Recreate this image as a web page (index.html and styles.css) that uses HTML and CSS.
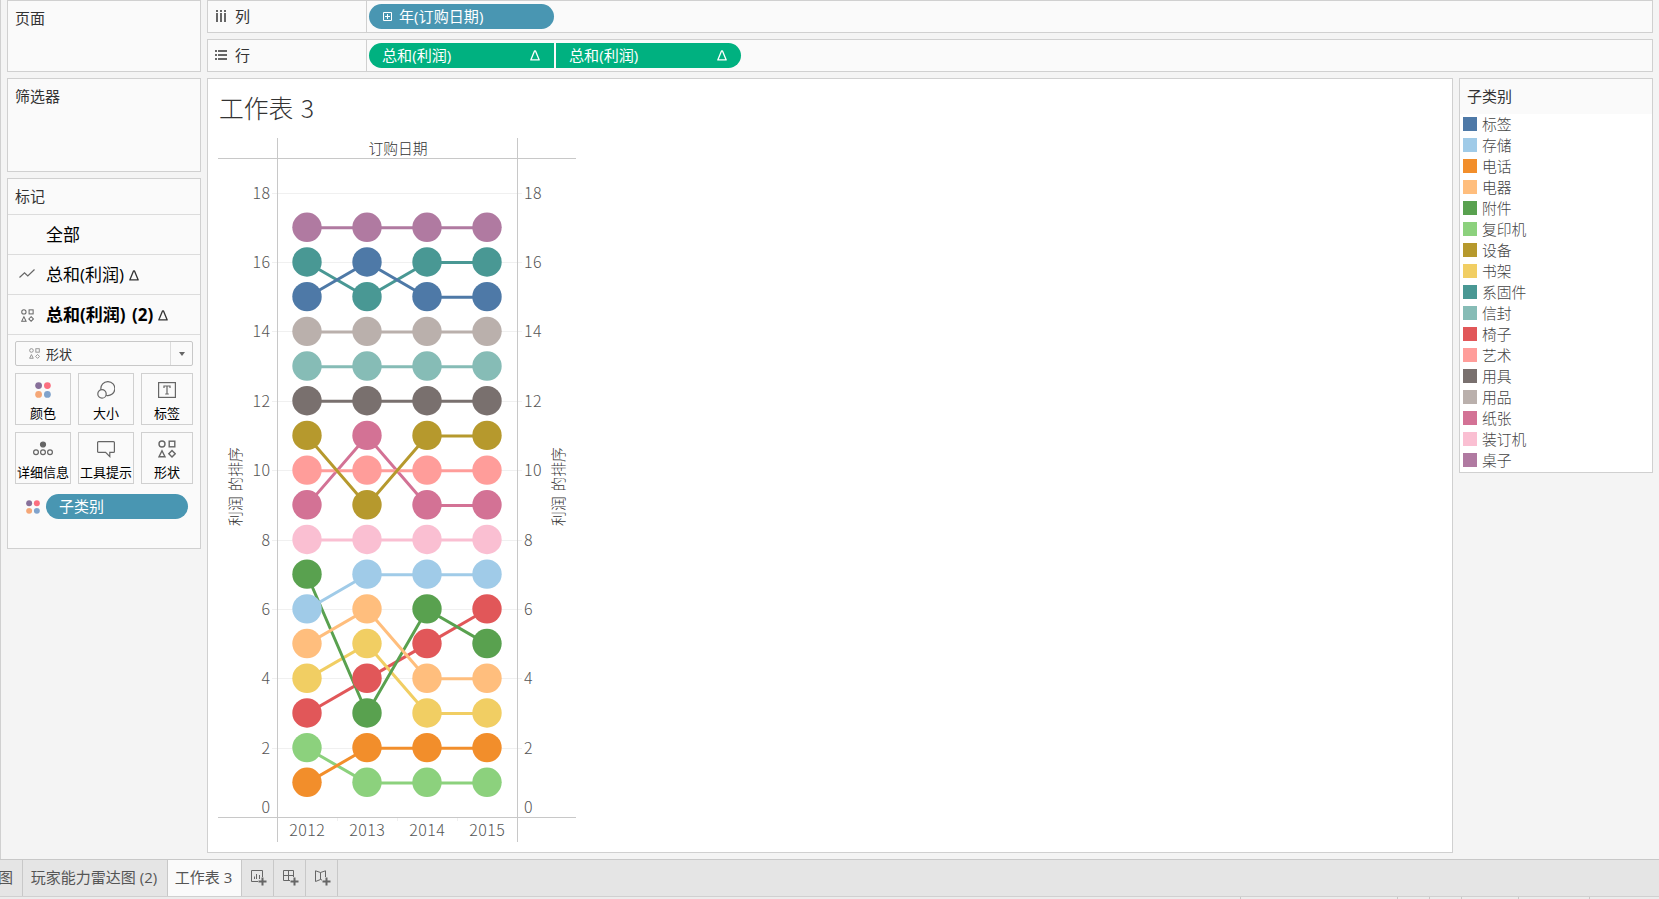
FILE: index.html
```
<!DOCTYPE html>
<html lang="zh-CN">
<head>
  <meta charset="UTF-8" />
  <title>工作表 3</title>
  <link rel="stylesheet" href="styles.css">
</head>
<body>

<!-- shared icons -->
<svg class="defs" width="0" height="0">
  <symbol id="shapes" viewBox="0 0 18 18">
    <g fill="none" stroke="currentColor" stroke-width="1.4">
      <circle cx="4" cy="4" r="3"/>
      <rect x="11.2" y="1.2" width="5.6" height="5.6"/>
      <path d="M4 10.8L7 16.8H1Z"/>
      <path d="M14 10.6L17.2 13.8L14 17L10.8 13.8Z"/>
    </g>
  </symbol>
  <symbol id="dots" viewBox="0 0 16 16">
    <circle cx="3.6" cy="3.6" r="3.4" fill="#87709a"/>
    <circle cx="12.4" cy="3.6" r="3.4" fill="#fb6f80"/>
    <circle cx="3.6" cy="12.4" r="3.4" fill="#f5a777"/>
    <circle cx="12.4" cy="12.4" r="3.4" fill="#80a3cc"/>
  </symbol>
  <symbol id="delta" viewBox="0 0 10 11">
    <path d="M4.5 .9H5.5L9.2 9.9H.8Z" fill="none" stroke="currentColor" stroke-width="1.3" stroke-linejoin="round"/>
  </symbol>
</svg>

<div class="workspace">
  <aside class="side">
    <section class="card pages">页面</section>
    <section class="card filters">筛选器</section>
    <section class="card marks">
      <div class="marks-title">标记</div>
      <div class="layer">全部</div>
      <div class="layer">
        <svg class="layer-icon" width="17" height="18" viewBox="0 0 17 18"><path d="M.5 11.5L5.5 6.8L8.8 10L15.5 3.5" fill="none" stroke="#666" stroke-width="1.2"/></svg>
        <span>总和(利润)</span><svg class="delta" width="10" height="11"><use href="#delta"/></svg>
      </div>
      <div class="layer active">
        <svg class="layer-icon" width="13" height="13"><use href="#shapes"/></svg>
        <span>总和(利润) (2)</span><svg class="delta" width="10" height="11"><use href="#delta"/></svg>
      </div>
      <div class="mark-type">
        <svg width="11" height="11"><use href="#shapes"/></svg>
        <span>形状</span>
        <i class="arrow"></i>
      </div>
      <div class="buttons">
        <div class="btn"><svg width="18" height="18" viewBox="0 0 18 18"><use href="#dots" x="1" y="1" width="16" height="16"/></svg>颜色</div>
        <div class="btn">
          <svg width="18" height="18" viewBox="0 0 18 18" fill="none" stroke="#666" stroke-width="1.2"><path d="M3.9 8.4A7 7 0 1 1 9.2 14.4"/><circle cx="5" cy="12.9" r="4.2"/></svg>大小
        </div>
        <div class="btn">
          <svg width="18" height="18" viewBox="0 0 18 18" fill="none" stroke="#666" stroke-width="1.2"><rect x=".6" y="1.6" width="16.8" height="14.8"/><path d="M6 7V5H12V7M9 5V13M7.2 13H10.8"/></svg>标签
        </div>
        <div class="btn">
          <svg width="20" height="18" viewBox="0 0 20 18" fill="none" stroke="#666" stroke-width="1.2"><circle cx="10" cy="4.5" r="2.5" fill="#666"/><circle cx="3" cy="12.3" r="2.4"/><circle cx="10" cy="12.3" r="2.4"/><circle cx="17" cy="12.3" r="2.4"/></svg>详细信息
        </div>
        <div class="btn">
          <svg width="18" height="18" viewBox="0 0 18 18" fill="none" stroke="#666" stroke-width="1.2"><path d="M1.6 1.6H16.4Q17.4 1.6 17.4 2.6V11.4Q17.4 12.4 16.4 12.4H12.8V16.6L8.6 12.4H1.6Q.6 12.4 .6 11.4V2.6Q.6 1.6 1.6 1.6Z"/></svg>工具提示
        </div>
        <div class="btn"><svg class="gray" width="18" height="18"><use href="#shapes"/></svg>形状</div>
      </div>
      <div class="encoding">
        <svg width="14" height="14"><use href="#dots"/></svg>
        <div class="pill blue">子类别</div>
      </div>
    </section>
  </aside>

  <main class="main">
    <div class="shelf">
      <div class="shelf-label">
        <svg width="12" height="13" viewBox="0 0 12 13" fill="#666"><path d="M1 0h2v2H1zM5 0h2v2H5zM9 0h2v2H9zM1 3h2v9H1zM5 3h2v9H5zM9 3h2v9H9z"/></svg>
        列
      </div>
      <div class="pill blue year">
        <svg width="9" height="9" viewBox="0 0 9 9" fill="none" stroke="#fff"><path d="M.5 .5H8.5V8.5H.5ZM2 4.5H7M4.5 2V7"/></svg>
        年(订购日期)
      </div>
    </div>
    <div class="shelf">
      <div class="shelf-label">
        <svg width="12" height="10" viewBox="0 0 12 10" fill="#666"><path d="M0 0h2v2H0zM3 0h9v2H3zM0 4h2v2H0zM3 4h9v2H3zM0 8h2v2H0zM3 8h9v2H3z"/></svg>
        行
      </div>
      <div class="pill green first">总和(利润)<svg width="10" height="11"><use href="#delta"/></svg></div>
      <div class="pill green last">总和(利润)<svg width="10" height="11"><use href="#delta"/></svg></div>
    </div>
    <div class="content">
      <section class="sheet">
        <h1>工作表 3</h1>
        <svg id="chart" width="358" height="704" viewBox="218 138 358 704"></svg>
      </section>
      <section class="legend">
        <h2>子类别</h2>
        <ul id="legend"></ul>
      </section>
    </div>
  </main>
</div>

<nav class="tabs">
  <div class="tab cut">图</div>
  <div class="tab radar">玩家能力雷达图 (2)</div>
  <div class="tab current">工作表 3</div>
  <div class="tab new"><svg width="16" height="16" viewBox="0 0 16 16" fill="none" stroke="#666"><path d="M7 11.5H.5V.5H11.5V7M3.5 9V6.5M5.5 9V4M8.5 9V5"/><path d="M11.5 7.5V15.5M7.5 11.5H15.5" stroke-width="2"/></svg></div>
  <div class="tab new"><svg width="16" height="16" viewBox="0 0 16 16" fill="none" stroke="#666"><path d="M7 10.5H.5V.5H10.5V7M5.5 .5V10.5M.5 5.5H10.5"/><path d="M11.5 7.5V15.5M7.5 11.5H15.5" stroke-width="2"/></svg></div>
  <div class="tab new"><svg width="16" height="16" viewBox="0 0 16 16" fill="none" stroke="#666"><path d="M7 10L5.5 9.5L.5 11.5V.8L5.5 2.5L10.5 .8V7M5.5 2.5V9.5"/><path d="M11.5 7.5V15.5M7.5 11.5H15.5" stroke-width="2"/></svg></div>
</nav>
<footer class="status"><i></i><i></i><i></i><i></i><i></i><i></i></footer>

<script>
  const years = [2012, 2013, 2014, 2015];

  // rank per year, in legend order
  const series = [
    { name: '标签', color: '#4e79a7', rank: [15, 16, 15, 15] },
    { name: '存储', color: '#a0cbe8', rank: [6, 7, 7, 7] },
    { name: '电话', color: '#f28e2b', rank: [1, 2, 2, 2] },
    { name: '电器', color: '#ffbe7d', rank: [5, 6, 4, 4] },
    { name: '附件', color: '#59a14f', rank: [7, 3, 6, 5] },
    { name: '复印机', color: '#8cd17d', rank: [2, 1, 1, 1] },
    { name: '设备', color: '#b6992d', rank: [11, 9, 11, 11] },
    { name: '书架', color: '#f1ce63', rank: [4, 5, 3, 3] },
    { name: '系固件', color: '#499894', rank: [16, 15, 16, 16] },
    { name: '信封', color: '#86bcb6', rank: [13, 13, 13, 13] },
    { name: '椅子', color: '#e15759', rank: [3, 4, 5, 6] },
    { name: '艺术', color: '#ff9d9a', rank: [10, 10, 10, 10] },
    { name: '用具', color: '#79706e', rank: [12, 12, 12, 12] },
    { name: '用品', color: '#bab0ac', rank: [14, 14, 14, 14] },
    { name: '纸张', color: '#d37295', rank: [9, 11, 9, 9] },
    { name: '装订机', color: '#fabfd2', rank: [8, 8, 8, 8] },
    { name: '桌子', color: '#b07aa1', rank: [17, 17, 17, 17] }
  ];

  const x = i => 307 + i * 60;
  const y = v => 817.6 - v * 34.69;
  let out = '';

  // grid and axis numbers
  for (let v = 0; v <= 18; v += 2) {
    const gy = Math.floor(y(v)) + 0.5;
    const ty = (v === 0 ? 807 : gy) + 5.5;
    if (v > 0) out += `<path class="grid" d="M272 ${gy}H522"/>`;
    out += `<text class="num" x="270.5" y="${ty}" text-anchor="end">${v}</text>`;
    out += `<text class="num" x="524" y="${ty}">${v}</text>`;
  }
  out += '<path class="grid" d="M337.5 818V821M397.5 818V821M457.5 818V821"/>';
  out += '<path class="rule" d="M218 158.5H576M218 817.5H576M277.5 138V842M517.5 138V842"/>';

  // first series is drawn last so it stays on top
  const stack = series.slice().reverse();
  for (const s of stack) {
    const pts = s.rank.map((r, i) => `${x(i)},${y(r)}`).join(' ');
    out += `<polyline points="${pts}" stroke="${s.color}"/>`;
  }
  for (const s of stack) {
    s.rank.forEach((r, i) => {
      out += `<circle cx="${x(i)}" cy="${y(r) - 0.6}" r="14.7" fill="${s.color}"/>`;
    });
  }

  years.forEach((t, i) => {
    out += `<text class="num" x="${x(i) + 0.2}" y="836" text-anchor="middle">${t}</text>`;
  });
  out += '<text class="title" x="398" y="153.5" text-anchor="middle">订购日期</text>';
  out += '<text class="title" transform="translate(241 486.5) rotate(-90)" text-anchor="middle">利润 的排序</text>';
  out += '<text class="title" transform="translate(564 486.5) rotate(-90)" text-anchor="middle">利润 的排序</text>';
  document.getElementById('chart').innerHTML = out;

  document.getElementById('legend').innerHTML = series
    .map(s => `<li><i style="background:${s.color}"></i>${s.name}</li>`)
    .join('');
</script>

</body>
</html>
```

FILE: styles.css
```
* {
  box-sizing: border-box;
}

body {
  margin: 0;
  height: 899px;
  overflow: hidden;
  display: flex;
  flex-direction: column;
  background: #f4f4f4;
  color: #333;
  font-family: "Open Sans", "Noto Sans CJK SC", sans-serif;
  font-size: 15px;
  line-height: 20px;
}

svg {
  display: block;
  flex: none;
}

.defs {
  position: absolute;
}

.workspace {
  display: flex;
  gap: 6px;
  height: 859px;
  padding-left: 6px;
  border-left: 1px solid #d0d0d0;
}

.side {
  display: flex;
  flex-direction: column;
  gap: 6px;
  width: 194px;
}

.card {
  background: #fafafa;
  border: 1px solid #d0d0d0;
  padding: 7px;
}

.pages {
  height: 72px;
}

.filters {
  height: 94px;
}

.marks {
  height: 371px;
  padding: 0;
}

.marks-title {
  height: 35px;
  padding: 7px;
}

.layer {
  display: flex;
  align-items: center;
  height: 40px;
  padding: 1px 0 0 38px;
  border-top: 1px solid #dcdcdc;
  color: #000;
  font-size: 17px;
  word-spacing: 2px;
}

.layer.active {
  height: 41px;
  border-bottom: 1px solid #dcdcdc;
  font-weight: bold;
}

.layer-icon {
  width: 17px;
  margin-left: -27px;
  margin-right: 10px;
  color: #666;
}

.delta {
  margin-left: 5px;
  color: #333;
}

.mark-type {
  display: flex;
  align-items: center;
  height: 25px;
  margin: 6px 7px 7px;
  padding-left: 13px;
  border: 1px solid #c8c8c8;
  border-radius: 2px;
  color: #888;
  font-size: 13px;
}

.mark-type span {
  flex: 1;
  margin-left: 6px;
  color: #333;
}

.arrow {
  display: flex;
  align-items: center;
  justify-content: center;
  width: 22px;
  height: 23px;
  border-left: 1px solid #dcdcdc;
}

.arrow::before {
  content: "";
  border: 3.5px solid transparent;
  border-top: 4px solid #666;
  border-bottom: 0;
}

.buttons {
  display: grid;
  grid-template-columns: 56px 56px 52px;
  gap: 7px;
  padding: 0 7px;
}

.btn {
  display: flex;
  flex-direction: column;
  align-items: center;
  gap: 5px;
  height: 52px;
  padding-top: 7px;
  border: 1px solid #d0d0d0;
  color: #000;
  font-size: 13px;
  line-height: 18px;
  white-space: nowrap;
}

.gray {
  color: #666;
}

.encoding {
  display: flex;
  align-items: center;
  gap: 6px;
  padding: 10px 0 0 18px;
}

.pill {
  display: flex;
  align-items: center;
  height: 25px;
  padding: 0 0 1px 13px;
  border-radius: 13px;
  color: #fff;
}

.blue {
  background: #4996b2;
}

.green {
  background: #00b180;
  justify-content: space-between;
  padding-right: 14px;
}

.encoding .pill {
  width: 142px;
}

.main {
  display: flex;
  flex-direction: column;
  gap: 6px;
  width: 1446px;
}

.shelf {
  display: flex;
  align-items: center;
  gap: 2px;
  height: 33px;
  background: #fafafa;
  border: 1px solid #d0d0d0;
}

.shelf-label {
  display: flex;
  align-items: center;
  gap: 8px;
  width: 159px;
  height: 31px;
  padding: 0 0 1px 7px;
  border-right: 1px solid #d0d0d0;
}

.shelf .pill {
  width: 185px;
  font-size: 15.1px;
}

.year {
  gap: 7px;
}

.shelf .year {
  padding-left: 14px;
}

.first {
  border-radius: 13px 0 0 13px;
}

.last {
  border-radius: 0 13px 13px 0;
}

.content {
  display: flex;
  align-items: flex-start;
  gap: 6px;
}

.sheet {
  width: 1246px;
  height: 775px;
  padding: 11px 10px 0;
  background: #fff;
  border: 1px solid #d0d0d0;
}

.sheet h1 {
  margin: 0 0 14px 1px;
  font-family: "Noto Sans CJK SC", sans-serif;
  font-size: 24.8px;
  font-weight: 300;
  line-height: 34px;
  word-spacing: 2px;
}

.grid {
  stroke: #f0f0f0;
}

.rule {
  stroke: #c8c8c8;
}

polyline {
  fill: none;
  stroke-width: 3;
}

.num {
  fill: #555;
  font-family: "Noto Sans CJK SC", sans-serif;
  font-size: 16px;
  font-weight: 300;
  letter-spacing: .4px;
}

.title {
  fill: #333;
  font-family: "Noto Sans CJK SC", sans-serif;
  font-size: 14.8px;
  font-weight: 300;
  word-spacing: 1.5px;
}

.legend {
  width: 194px;
  height: 395px;
  background: #fff;
  border: 1px solid #d0d0d0;
}

.legend h2 {
  margin: 0;
  height: 35px;
  padding: 7px;
  background: #fafafa;
  font-size: 15px;
  font-weight: normal;
}

.legend ul {
  margin: -1px 0 0;
  padding: 0 3px;
  list-style: none;
}

.legend li {
  display: flex;
  align-items: center;
  gap: 5px;
  height: 21px;
  color: #444;
  font-family: "Noto Sans CJK SC", sans-serif;
  font-size: 14.8px;
  font-weight: 300;
}

.legend i {
  width: 14px;
  height: 14px;
}

.tabs {
  display: flex;
  height: 38px;
  background: #e5e5e5;
  border-top: 1px solid #c8c8c8;
  border-bottom: 1px solid #d0d0d0;
}

.tab {
  display: flex;
  align-items: center;
  justify-content: center;
  padding: 0 2px 2px 0;
  border-right: 1px solid #c8c8c8;
  color: #555;
  white-space: nowrap;
}

.cut {
  width: 23px;
  justify-content: flex-end;
  padding-right: 9px;
}

.radar {
  width: 145px;
}

.current {
  width: 74px;
  background: #fafafa;
}

.new {
  width: 32px;
  padding: 0 0 1px 2px;
}

.status {
  display: flex;
  height: 2px;
  background: #ececec;
}

.status i {
  width: 57px;
  border-right: 1px solid #c8c8c8;
}

.status i:nth-child(1) {
  width: 1241px;
}

.status i:nth-child(2) {
  width: 157px;
}

.status i:nth-child(3),
.status i:nth-child(4) {
  width: 32px;
}

.status i:nth-child(6) {
  width: 71px;
}
```
